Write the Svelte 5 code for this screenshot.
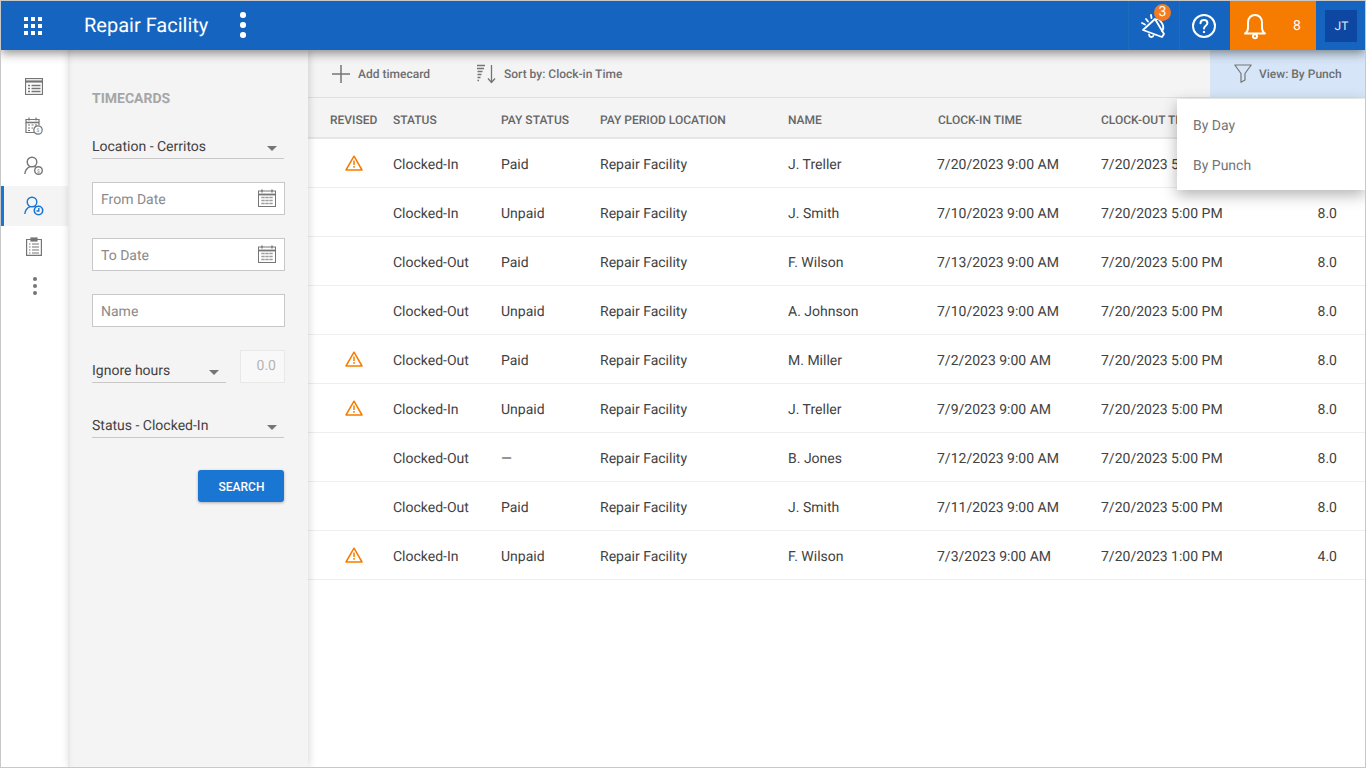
<script>
	const rows = [
		{ warn: true, status: 'Clocked-In', pay: 'Paid', name: 'J. Treller', clockIn: '7/20/2023 9:00 AM', clockOut: '7/20/2023 5:00 PM', hours: '8.0' },
		{ warn: false, status: 'Clocked-In', pay: 'Unpaid', name: 'J. Smith', clockIn: '7/10/2023 9:00 AM', clockOut: '7/20/2023 5:00 PM', hours: '8.0' },
		{ warn: false, status: 'Clocked-Out', pay: 'Paid', name: 'F. Wilson', clockIn: '7/13/2023 9:00 AM', clockOut: '7/20/2023 5:00 PM', hours: '8.0' },
		{ warn: false, status: 'Clocked-Out', pay: 'Unpaid', name: 'A. Johnson', clockIn: '7/10/2023 9:00 AM', clockOut: '7/20/2023 5:00 PM', hours: '8.0' },
		{ warn: true, status: 'Clocked-Out', pay: 'Paid', name: 'M. Miller', clockIn: '7/2/2023 9:00 AM', clockOut: '7/20/2023 5:00 PM', hours: '8.0' },
		{ warn: true, status: 'Clocked-In', pay: 'Unpaid', name: 'J. Treller', clockIn: '7/9/2023 9:00 AM', clockOut: '7/20/2023 5:00 PM', hours: '8.0' },
		{ warn: false, status: 'Clocked-Out', pay: '—', name: 'B. Jones', clockIn: '7/12/2023 9:00 AM', clockOut: '7/20/2023 5:00 PM', hours: '8.0' },
		{ warn: false, status: 'Clocked-Out', pay: 'Paid', name: 'J. Smith', clockIn: '7/11/2023 9:00 AM', clockOut: '7/20/2023 5:00 PM', hours: '8.0' },
		{ warn: true, status: 'Clocked-In', pay: 'Unpaid', name: 'F. Wilson', clockIn: '7/3/2023 9:00 AM', clockOut: '7/20/2023 1:00 PM', hours: '4.0' }
	];
</script>

{#snippet calendar()}
	<svg class="cal" width="18" height="18" viewBox="0 0 18 18" fill="none" stroke="#757575">
		<rect x="0.5" y="2" width="17" height="15.5" />
		<path d="M0.5 5.5h17" stroke-width="1.8" />
		<path d="M4 0.5v3M14 0.5v3" stroke-width="1.4" />
		<path d="M3.500 8.500h3M7.500 8.500h3M11.500 8.500h3M3.500 11.500h3M7.500 11.500h3M11.500 11.500h3M3.500 14.500h3M7.500 14.500h3M11.500 14.500h3" stroke-width="1.300" stroke-dasharray="1.200 0.600" />
	</svg>
{/snippet}

{#snippet caret()}
	<span class="caret"></span>
{/snippet}

<div class="page">
	<header class="topbar">
		<button class="apps" aria-label="Apps">
			<svg width="18" height="18" viewBox="0 0 18 18" fill="#fff">
				{#each [0, 7, 14] as y}
					{#each [0, 7, 14] as x}
						<rect {x} {y} width="4" height="4" />
					{/each}
				{/each}
			</svg>
		</button>
		<div class="title">Repair Facility</div>
		<div class="kebab"><i></i><i></i><i></i></div>
		<div class="spacer"></div>
		<div class="tool announce">
			<svg width="28" height="28" viewBox="0 0 28 28" fill="none" stroke="#fff" stroke-width="1.800" stroke-linejoin="round" stroke-linecap="round">
				<path d="M3 18 15 7l9 15-2 3z" />
				<path d="M16 7.500c3-1.500 6 3 7 6 .7 2.500 0 4.500-1 5.500" />
				<path d="M9 22.500c0 2.500 3.500 3.500 4.500 1" />
				<path d="M2 11l3 1.500M6 7l2 2.500M11 3l.5 3" />
			</svg>
			<span class="badge">3</span>
		</div>
		<div class="tool help">
			<svg width="26" height="26" viewBox="0 0 26 26" fill="none" stroke="#fff" stroke-width="2">
				<circle cx="13" cy="13" r="11" />
				<path d="M9.500 10.300c0-2 1.500-3.300 3.500-3.300s3.400 1.200 3.400 3c0 2.800-3.400 2.700-3.400 5.500" stroke-linecap="round" />
				<circle cx="13" cy="18.900" r="1.200" fill="#fff" stroke="none" />
			</svg>
		</div>
		<div class="alerts">
			<svg width="24" height="28" viewBox="0 0 24 28" fill="none" stroke="#fff" stroke-width="2" stroke-linejoin="round">
				<path d="M2 21.500c2-1.500 3-3 3-5.500v-5.500C5 6 8 3 12 3s7 3 7 7.500V16c0 2.500 1 4 3 5.500z" />
				<circle cx="12" cy="24.300" r="2" />
			</svg>
			<span class="count">8</span>
		</div>
		<div class="user"><span class="avatar">JT</span></div>
	</header>

	<div class="body">
		<nav class="rail">
			<div class="rail-item">
				<svg width="18" height="17" viewBox="0 0 18 17" fill="none" stroke="#757575">
					<rect x="0.500" y="0.500" width="17" height="16" stroke-width="1.300" />
					<path d="M0.500 3.500h17" stroke-width="2.200" />
					<path d="M3 7.500h2M6.500 7.500h9M3 10.500h2M6.500 10.500h9M3 13.500h2M6.500 13.500h9" stroke-width="1.300" />
				</svg>
			</div>
			<div class="rail-item">
				<svg width="18" height="18" viewBox="0 0 18 18" fill="none" stroke="#757575" stroke-width="1.200">
					<path d="M9 15.500H1V2.500h13V8" />
					<path d="M1 5.500h13" stroke-width="1.600" />
					<path d="M4 .500v3M11 .500v3" />
					<path d="M3 8h2M6.500 8h2M10 8h2M3 11h2M6.500 11h1.500M3 13.500h2" />
					<circle cx="13" cy="13" r="4.200" fill="#fff" />
					<text x="13" y="15" class="dollar">$</text>
				</svg>
			</div>
			<div class="rail-item">
				<svg width="20" height="20" viewBox="0 0 20 20" fill="none" stroke="#757575" stroke-width="1.400">
					<circle cx="8" cy="6" r="4.800" />
					<path d="M.800 18c.3-3.700 2.700-6.300 5.400-7.400M10.500 10.500c.7.300 1 .5 1.300.8" />
					<circle cx="14.500" cy="14.500" r="3.800" fill="#fff" />
					<text x="14.500" y="16.500" class="dollar">$</text>
				</svg>
			</div>
			<div class="rail-item active">
				<svg width="20" height="20" viewBox="0 0 20 20" fill="none" stroke="#1976d2" stroke-width="1.400">
					<circle cx="8" cy="6" r="4.800" />
					<path d="M.800 18c.3-3.700 2.700-6.300 5.400-7.400M10.500 10.500c.7.300 1 .5 1.300.8" />
					<circle cx="14.500" cy="14.500" r="4.200" fill="#f4f4f4" stroke-width="1.600" />
					<path d="M14.800 12v3h-2.300" />
				</svg>
			</div>
			<div class="rail-item">
				<svg width="16" height="19" viewBox="0 0 16 19" fill="none" stroke="#757575" stroke-width="1.200">
					<path d="M5 2.500H.600v15.900h14.800V2.500H11" />
					<rect x="5" y="1" width="6" height="3" fill="#757575" />
					<path d="M3 7h1.500M6 7h7M3 10h1.500M6 10h7M3 13h1.500M6 13h7M3 16h1.500M6 16h7" />
				</svg>
			</div>
			<div class="rail-more"><i></i><i></i><i></i></div>
		</nav>

		<aside class="filters">
			<h2>TIMECARDS</h2>
			<div class="select first">Location - Cerritos {@render caret()}</div>
			<div class="input">From Date {@render calendar()}</div>
			<div class="input">To Date {@render calendar()}</div>
			<div class="input">Name</div>
			<div class="hours-row">
				<div class="select small">Ignore hours {@render caret()}</div>
				<div class="hours-input">0.0</div>
			</div>
			<div class="select status">Status - Clocked-In {@render caret()}</div>
			<div class="actions"><button class="search">SEARCH</button></div>
		</aside>

		<main class="content">
			<div class="toolbar">
				<div class="tb-btn add">
					<svg width="18" height="18" viewBox="0 0 18 18" stroke="#757575" stroke-width="1.500"><path d="M9 0v18M0 9h18" /></svg>
					Add timecard
				</div>
				<div class="tb-btn sort">
					<svg width="20" height="20" viewBox="0 0 20 20" fill="none" stroke="#757575" stroke-width="1.300">
						<path d="M0 1.500h8M0 4.500h7M.500 7.500h5M.500 10.500h4M.500 13.500h3M.500 16.500h1.500" />
						<path d="M14.500 1v17M11 14.500l3.500 4 3.500-4" />
					</svg>
					Sort by: Clock-in Time
				</div>
				<div class="tb-view">
					<svg width="18" height="19" viewBox="0 0 18 19" fill="none" stroke="#757575" stroke-width="1.200" stroke-linejoin="round">
						<path d="M.800 1h16.400l-6.200 8.500v6.500l-4 2.300V9.500z" />
					</svg>
					View: By Punch
				</div>
			</div>

			<div class="tr thead">
				<div>REVISED</div>
				<div>STATUS</div>
				<div>PAY STATUS</div>
				<div>PAY PERIOD LOCATION</div>
				<div>NAME</div>
				<div class="shift">CLOCK-IN TIME</div>
				<div>CLOCK-OUT TIME</div>
				<div class="num">HOURS</div>
			</div>

			{#each rows as row}
				<div class="tr">
					<div class="warn-cell">
						{#if row.warn}
							<svg width="18" height="16" viewBox="0 0 18 16" fill="none" stroke="#f57c00" stroke-width="1.500" stroke-linejoin="round">
								<path d="M9 1.200 17 15H1z" />
								<path d="M9 5.500v4.500M9 11v1.800" />
							</svg>
						{/if}
					</div>
					<div>{row.status}</div>
					<div>{row.pay}</div>
					<div>Repair Facility</div>
					<div>{row.name}</div>
					<div>{row.clockIn}</div>
					<div>{row.clockOut}</div>
					<div class="num">{row.hours}</div>
				</div>
			{/each}

			<div class="menu">
				<div>By Day</div>
				<div>By Punch</div>
			</div>
		</main>
	</div>
</div>

<style>
	:global(body) {
		margin: 0;
		background: #fff;
	}

	.page {
		width: 1366px;
		height: 768px;
		box-sizing: border-box;
		border: 1px solid #c8c8c8;
		font-family: Roboto, "Liberation Sans", sans-serif;
		text-rendering: geometricPrecision;
		color: #424242;
		display: flex;
		flex-direction: column;
		overflow: hidden;
	}

	.topbar {
		height: 49px;
		flex: none;
		background: #1565c0;
		display: flex;
		align-items: center;
		position: relative;
		z-index: 3;
		box-shadow: 0 3px 10px rgba(0, 0, 0, 0.45);
		color: #fff;
	}

	.apps {
		width: 64px;
		height: 49px;
		padding: 0;
		border: 0;
		background: none;
		display: flex;
		align-items: center;
		justify-content: center;
	}

	.title {
		margin-left: 19px;
		padding-bottom: 1px;
		font-size: 20px;
	}

	.kebab {
		margin-left: 32px;
		display: flex;
		flex-direction: column;
		gap: 4.500px;
		margin-top: -1px;
	}

	.kebab i {
		width: 5.500px;
		height: 5.500px;
		border-radius: 50%;
		background: #fff;
	}

	.spacer {
		flex: 1;
	}

	.tool {
		height: 49px;
		width: 51px;
		display: flex;
		align-items: center;
		justify-content: center;
		position: relative;
		border-left: 1px solid #1a6fb8;
		box-sizing: border-box;
	}

	.help {
		padding-right: 2px;
	}

	.badge {
		position: absolute;
		top: 3px;
		left: 25px;
		width: 17px;
		height: 17px;
		border-radius: 50%;
		background: #f47b20;
		font-size: 14px;
		line-height: 17px;
		text-align: center;
	}

	.alerts {
		width: 86px;
		height: 49px;
		background: #f57c00;
		display: flex;
		align-items: center;
		box-sizing: border-box;
		padding-left: 13px;
	}

	.count {
		margin-left: 26px;
		font-size: 14px;
	}

	.user {
		width: 49px;
		display: flex;
		justify-content: center;
		padding-left: 1px;
		box-sizing: border-box;
	}

	.avatar {
		width: 32px;
		height: 32px;
		padding-left: 1px;
		box-sizing: border-box;
		background: #0d47a1;
		font-size: 12px;
		line-height: 32px;
		text-align: center;
		color: #e3e9f5;
	}

	.body {
		flex: 1;
		display: flex;
		min-height: 0;
	}

	.rail {
		width: 67px;
		flex: none;
		padding-top: 16px;
		box-sizing: border-box;
		background: #fff;
	}

	.rail-item {
		height: 40px;
		display: flex;
		align-items: center;
		justify-content: center;
		box-sizing: border-box;
		padding-right: 2px;
	}

	.rail-item.active {
		background: #f4f4f4;
		border-left: 3px solid #1976d2;
		padding-right: 5px;
	}

	.dollar {
		font-size: 5px;
		fill: #757575;
		stroke: none;
		text-anchor: middle;
		font-family: Roboto, sans-serif;
	}

	.rail-more {
		height: 40px;
		display: flex;
		flex-direction: column;
		align-items: center;
		justify-content: center;
		gap: 3px;
	}

	.rail-more i {
		width: 4px;
		height: 4px;
		border-radius: 50%;
		background: #757575;
	}

	.filters {
		width: 240px;
		flex: none;
		box-sizing: border-box;
		background: #f4f4f4;
		padding: 41px 24px 0 24px;
		box-shadow: inset 6px 0 6px -6px rgba(0, 0, 0, 0.1), 1px 0 8px rgba(0, 0, 0, 0.16);
		position: relative;
		z-index: 1;
	}

	h2 {
		margin: 0;
		font-size: 14px;
		line-height: 16px;
		font-weight: 700;
		color: #a6a6a6;
	}

	.select {
		position: relative;
		height: 23px;
		box-sizing: border-box;
		width: 192px;
		font-size: 14px;
		line-height: 23px;
		border-bottom: 1px solid #c8c8c8;
		color: #424242;
	}

	.select.first {
		margin-top: 29px;
	}

	.caret {
		position: absolute;
		right: 7px;
		top: 10px;
		border: 5px solid transparent;
		border-top: 5px solid #757575;
		border-bottom: 0;
	}

	.input {
		position: relative;
		margin-top: 23px;
		height: 33px;
		box-sizing: border-box;
		border: 1px solid #c8c8c8;
		background: #fff;
		padding: 1px 0 0 8px;
		font-size: 14px;
		line-height: 32px;
		color: #8a8a8a;
		width: 193px;
	}

	.cal {
		position: absolute;
		right: 8px;
		top: 6px;
	}

	.hours-row {
		display: flex;
		justify-content: space-between;
		align-items: flex-end;
		margin-top: 23px;
		width: 193px;
	}

	.select.small {
		width: 134px;
	}

	.hours-input {
		width: 45px;
		height: 33px;
		box-sizing: border-box;
		border: 1px solid #e8e8e8;
		background: #f8f8f8;
		font-size: 14px;
		line-height: 31px;
		text-align: right;
		padding-right: 8px;
		color: #b5b5b5;
	}

	.select.status {
		margin-top: 32px;
	}

	.actions {
		display: flex;
		justify-content: flex-end;
		margin-top: 32px;
		width: 192px;
	}

	.search {
		width: 86px;
		height: 32px;
		padding: 1px 0 0 1px;
		border: 0;
		border-radius: 3px;
		background: #1976d2;
		color: #fff;
		font-family: inherit;
		font-size: 12px;
		font-weight: 500;
		box-shadow: 0 1px 3px rgba(0, 0, 0, 0.3);
	}

	.content {
		flex: 1;
		position: relative;
		min-width: 0;
	}

	.toolbar {
		height: 48px;
		background: #f4f4f4;
		border-bottom: 1px solid #e0e0e0;
		box-sizing: border-box;
		display: flex;
		align-items: center;
		padding-left: 24px;
		font-size: 12px;
		font-weight: 500;
		color: #6e6e6e;
	}

	.tb-btn {
		display: flex;
		align-items: center;
	}

	.add {
		gap: 8px;
	}

	.sort {
		margin-left: 47px;
		gap: 7px;
	}

	.tb-view {
		margin-left: auto;
		width: 155px;
		height: 47px;
		box-sizing: border-box;
		background: #d6e6f8;
		display: flex;
		align-items: center;
		padding-left: 24px;
		gap: 7px;
	}

	.tr {
		display: grid;
		grid-template-columns: 63px 108px 99px 188px 149px 164px 1fr 60px;
		align-items: center;
		height: 49px;
		box-sizing: border-box;
		padding: 4px 28px 0 22px;
		border-bottom: 1px solid #eee;
		font-size: 14px;
		color: #424242;
	}

	.thead {
		height: 41px;
		background: #f4f4f4;
		border-bottom: 2px solid #e6e6e6;
		font-size: 12px;
		font-weight: 500;
		color: #666;
		padding-top: 5px;
	}

	.shift {
		margin-left: 1px;
	}

	.num {
		text-align: right;
	}

	.warn-cell {
		display: flex;
		padding-left: 15px;
		margin-top: -4px;
	}

	.menu {
		position: absolute;
		top: 49px;
		right: 0;
		width: 188px;
		height: 91px;
		box-sizing: border-box;
		background: #fff;
		padding-top: 7px;
		box-shadow: 0 5px 14px rgba(0, 0, 0, 0.3);
		font-size: 14px;
		color: #757575;
		z-index: 2;
	}

	.menu div {
		height: 40px;
		line-height: 40px;
		padding-left: 16px;
	}
</style>
